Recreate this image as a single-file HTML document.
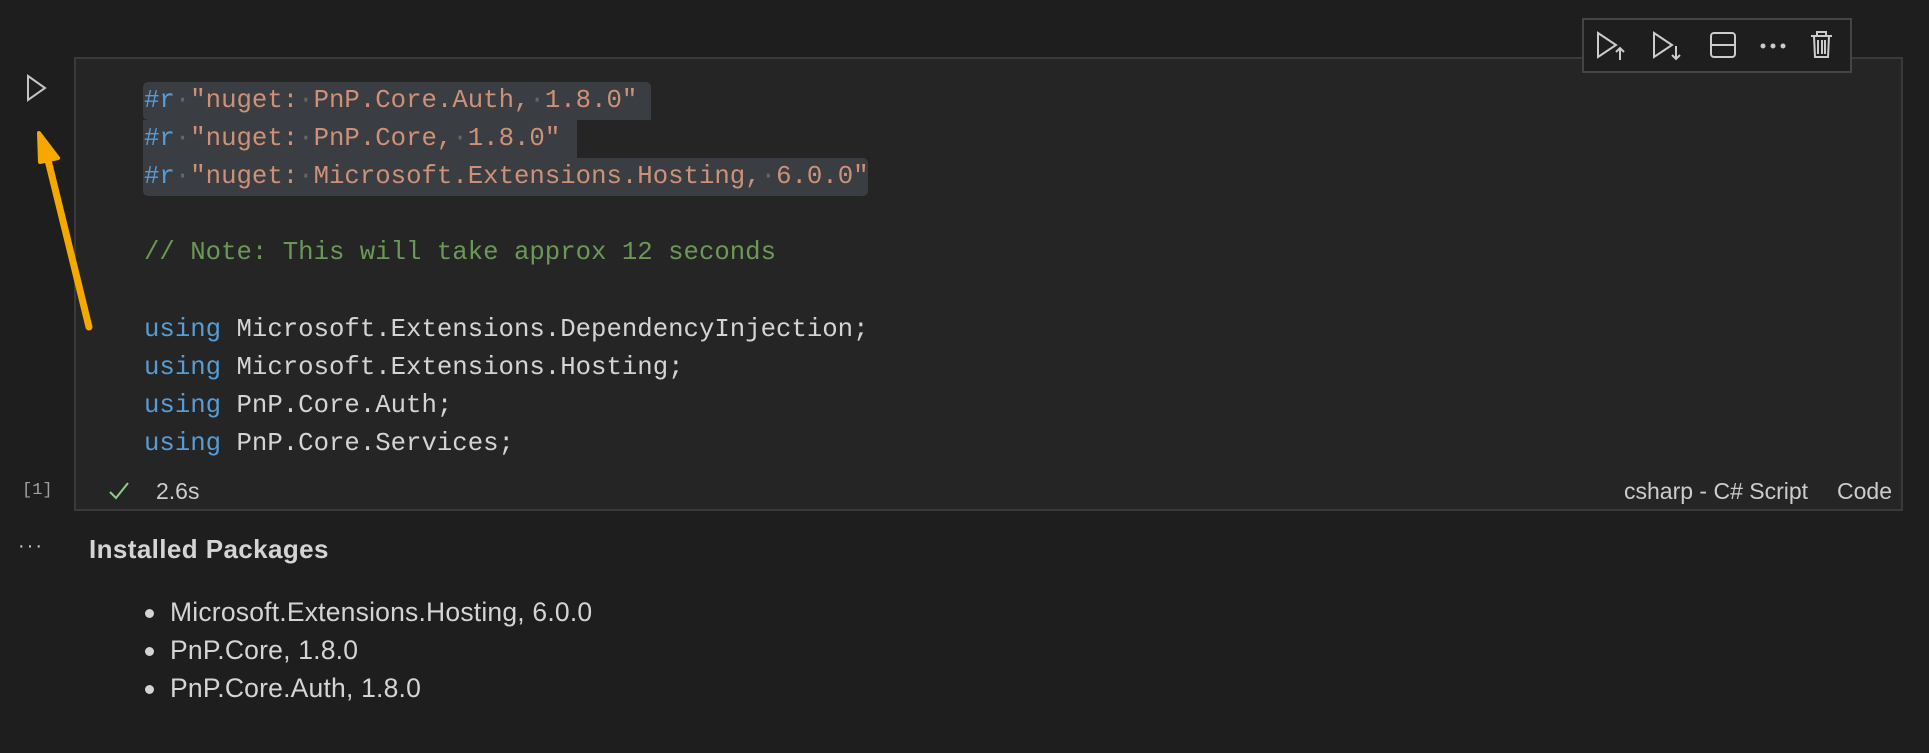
<!DOCTYPE html>
<html><head><meta charset="utf-8"><style>
body{margin:0;width:1929px;height:753px;background:#1e1e1e;position:relative;overflow:hidden;font-family:"Liberation Sans",sans-serif;}
.cell{position:absolute;left:74px;top:57px;width:1829px;height:454px;background:#252526;border:2px solid #3a3a3a;box-sizing:border-box;}
.code{position:absolute;left:144px;font-family:"Liberation Mono",monospace;font-size:25.7px;color:#d4d4d4;white-space:pre;line-height:38px;height:38px;}
.sel{position:absolute;background:#3a3d41;}
.k{color:#569cd6}.s{color:#ce9178}.c{color:#6a9955}.d{color:#666}
.t{position:absolute;color:#cccccc;font-size:23px;}
.li{position:absolute;left:145px;color:#d4d4d4;font-size:26.5px;letter-spacing:0.2px}
.li:before{content:"";position:absolute;left:0;top:12px;width:9px;height:9px;border-radius:50%;background:#d4d4d4;}
.li span{margin-left:25px;}
</style></head><body>
<div class="cell"></div>
<div class="sel" style="left:143px;top:82px;width:508px;height:38px;border-radius:5px 5px 0 5px"></div>
<div class="sel" style="left:143px;top:120px;width:434px;height:38px;"></div>
<div class="sel" style="left:143px;top:158px;width:725px;height:38px;border-radius:0 5px 5px 5px"></div>
<div class="code" style="top:82px"><span class="k">#r</span><span class="d">·</span><span class="s">"nuget:<span class="d">·</span>PnP.Core.Auth,<span class="d">·</span>1.8.0"</span></div>
<div class="code" style="top:120px"><span class="k">#r</span><span class="d">·</span><span class="s">"nuget:<span class="d">·</span>PnP.Core,<span class="d">·</span>1.8.0"</span></div>
<div class="code" style="top:158px"><span class="k">#r</span><span class="d">·</span><span class="s">"nuget:<span class="d">·</span>Microsoft.Extensions.Hosting,<span class="d">·</span>6.0.0"</span></div>
<div class="code c" style="top:234px">// Note: This will take approx 12 seconds</div>
<div class="code" style="top:311px"><span class="k">using</span> Microsoft.Extensions.DependencyInjection;</div>
<div class="code" style="top:349px"><span class="k">using</span> Microsoft.Extensions.Hosting;</div>
<div class="code" style="top:387px"><span class="k">using</span> PnP.Core.Auth;</div>
<div class="code" style="top:425px"><span class="k">using</span> PnP.Core.Services;</div>
<svg style="position:absolute;left:26px;top:74px" width="22" height="28"><path d="M2 2 L19 14 L2 26 Z" fill="none" stroke="#c5c5c5" stroke-width="2"/></svg>
<svg style="position:absolute;left:0;top:0" width="120" height="340"><line x1="89" y1="327" x2="48" y2="160" stroke="#f5a800" stroke-width="7" stroke-linecap="round"/><path d="M39 133 L58 158 L40 162 Z" fill="#f5a800" stroke="#f5a800" stroke-width="4" stroke-linejoin="round"/></svg>
<div style="position:absolute;left:1582px;top:18px;width:270px;height:55px;background:#1e1e1e;border:2px solid #454545;box-sizing:border-box"></div>
<svg style="position:absolute;left:1582px;top:18px" width="270" height="55" fill="none" stroke="#cccccc" stroke-width="2">
<path d="M16 15 L34 27 L16 39 Z"/><path d="M38 42 V30 M34 34 L38 30 L42 34"/>
<path d="M72 15 L90 27 L72 39 Z"/><path d="M94 28 V41 M90 37 L94 41 L98 37"/>
<rect x="129" y="15" width="24" height="24" rx="3"/><path d="M129 27 H153"/>
<circle cx="181" cy="28" r="1.5" fill="#ccc"/><circle cx="191" cy="28" r="1.5" fill="#ccc"/><circle cx="201" cy="28" r="1.5" fill="#ccc"/>
<path d="M229 18 H250 M235 18 V14 H244 V18 M232 18 L233 39 H246 L247 18 M236 22 V36 M240 22 V36 M243 22 V36"/>
</svg>
<div class="t" style="left:22px;top:481px;font-family:'Liberation Mono',monospace;font-size:17px;color:#a0a0a0">[1]</div>
<svg style="position:absolute;left:107px;top:480px" width="24" height="22"><path d="M3 12 L9 18 L21 3" fill="none" stroke="#89d185" stroke-width="2"/></svg>
<div class="t" style="left:156px;top:478px">2.6s</div>
<div class="t" style="left:1624px;top:478px">csharp - C# Script</div>
<div class="t" style="left:1837px;top:478px">Code</div>
<div class="t" style="left:18px;top:535px;letter-spacing:2px;font-size:20px">···</div>
<div style="position:absolute;left:89px;top:534px;color:#d4d4d4;font-weight:bold;font-size:26px;letter-spacing:0.4px">Installed Packages</div>
<div class="li" style="top:597px"><span>Microsoft.Extensions.Hosting, 6.0.0</span></div>
<div class="li" style="top:635px"><span>PnP.Core, 1.8.0</span></div>
<div class="li" style="top:673px"><span>PnP.Core.Auth, 1.8.0</span></div>
</body></html>
